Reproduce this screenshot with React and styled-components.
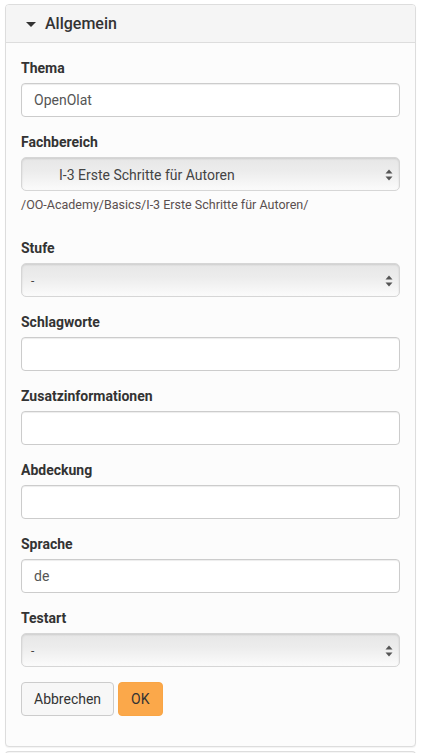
import React from 'react';
import styled, { createGlobalStyle } from 'styled-components';

const GlobalStyle = createGlobalStyle`
  html, body {
    margin: 0;
    padding: 0;
    background: #ffffff;
  }
  body {
    font-family: Roboto, "Liberation Sans", Arial, sans-serif;
    font-size: 14px;
    color: #333333;
  }
  * {
    box-sizing: border-box;
  }
`;

const Page = styled.div`
  padding: 4px 6px 0 5px;
  display: flex;
  flex-direction: column;
  gap: 4px;
`;

const Panel = styled.section`
  border: 1px solid #dddddd;
  border-radius: 4px;
  background: #fcfcfc;
  box-shadow: 0 1px 1px rgba(0, 0, 0, 0.05);
`;

const PanelHeader = styled.div`
  display: flex;
  align-items: center;
  height: 38px;
  padding: 0 15px 0 20px;
  background: #f5f5f5;
  border-bottom: 1px solid #dddddd;
  border-radius: 3px 3px 0 0;
  font-size: 16px;
  font-weight: 500;
  color: #333333;
  gap: 9px;
`;

const Caret = styled.span`
  width: 0;
  height: 0;
  border-left: 5px solid transparent;
  border-right: 5px solid transparent;
  border-top: 5px solid #333333;
  margin-top: 1px;
`;

const PanelBody = styled.div`
  padding: 15px;
`;

const FormGroup = styled.div`
  margin-bottom: 15px;
`;

const Label = styled.label`
  display: block;
  font-weight: 700;
  font-size: 14px;
  line-height: 20px;
  margin-bottom: 5px;
  color: #333333;
`;

const TextInput = styled.input`
  display: block;
  width: 379px;
  height: 34px;
  padding: 6px 12px;
  font-family: inherit;
  font-size: 14px;
  color: #555555;
  background: #ffffff;
  border: 1px solid #cccccc;
  border-radius: 4px;
  box-shadow: inset 0 1px 1px rgba(0, 0, 0, 0.075);
  outline: none;
`;

const SelectBox = styled.div`
  position: relative;
  width: 379px;
  height: 34px;
  display: flex;
  align-items: center;
  padding: 1px 30px 0 ${p => (p.$indent ? 37 : 9)}px;
  font-size: ${p => (p.$indent ? 14 : 12)}px;
  color: #444444;
  border: 1px solid #d6d6d6;
  border-radius: 5px;
  background: linear-gradient(#e7e7e7 0%, #ececec 40%, #fbfbfb 100%);
  box-shadow: inset 0 1px 2px rgba(0, 0, 0, 0.12);
`;

const Arrows = styled.svg`
  position: absolute;
  right: 6px;
  top: 11px;
`;

const HelpText = styled.div`
  margin-top: 5px;
  margin-bottom: 24px;
  font-size: 12.5px;
  line-height: 18px;
  color: #5a4f4f;
`;

const Buttons = styled.div`
  display: flex;
  gap: 4px;
  margin-top: 15px;
  margin-bottom: 15px;
`;

const Button = styled.button`
  height: 34px;
  padding: 0 12px;
  font-family: inherit;
  font-size: 14px;
  color: #333333;
  border-radius: 4px;
  border: 1px solid ${p => (p.$primary ? '#f9a545' : '#cccccc')};
  background: ${p => (p.$primary ? '#fba84a' : '#f7f7f7')};
`;

const NextPanel = styled.div`
  height: 8px;
  border: 1px solid #dddddd;
  border-bottom: none;
  border-radius: 4px 4px 0 0;
  background: #f5f5f5;
`;

const Select = ({ value, indent }) => (
  <SelectBox $indent={indent}>
    {value}
    <Arrows width="8" height="12" viewBox="0 0 8 12">
      <path d="M4 0.5 L7.5 4.5 H0.5 Z" fill="#555" />
      <path d="M4 11.5 L7.5 7.5 H0.5 Z" fill="#555" />
    </Arrows>
  </SelectBox>
);

const fields = [
  { label: 'Schlagworte', value: '' },
  { label: 'Zusatzinformationen', value: '' },
  { label: 'Abdeckung', value: '' },
  { label: 'Sprache', value: 'de' },
];

export default function App() {
  return (
    <>
      <GlobalStyle />
      <Page>
        <Panel>
          <PanelHeader>
            <Caret />
            Allgemein
          </PanelHeader>
          <PanelBody>
            <FormGroup>
              <Label>Thema</Label>
              <TextInput defaultValue="OpenOlat" />
            </FormGroup>
            <div>
              <Label>Fachbereich</Label>
              <Select value="I-3 Erste Schritte für Autoren" indent />
              <HelpText>/OO-Academy/Basics/I-3 Erste Schritte für Autoren/</HelpText>
            </div>
            <FormGroup>
              <Label>Stufe</Label>
              <Select value="-" />
            </FormGroup>
            {fields.map(f => (
              <FormGroup key={f.label}>
                <Label>{f.label}</Label>
                <TextInput defaultValue={f.value} />
              </FormGroup>
            ))}
            <div>
              <Label>Testart</Label>
              <Select value="-" />
            </div>
            <Buttons>
              <Button>Abbrechen</Button>
              <Button $primary>OK</Button>
            </Buttons>
          </PanelBody>
        </Panel>
        <NextPanel />
      </Page>
    </>
  );
}
